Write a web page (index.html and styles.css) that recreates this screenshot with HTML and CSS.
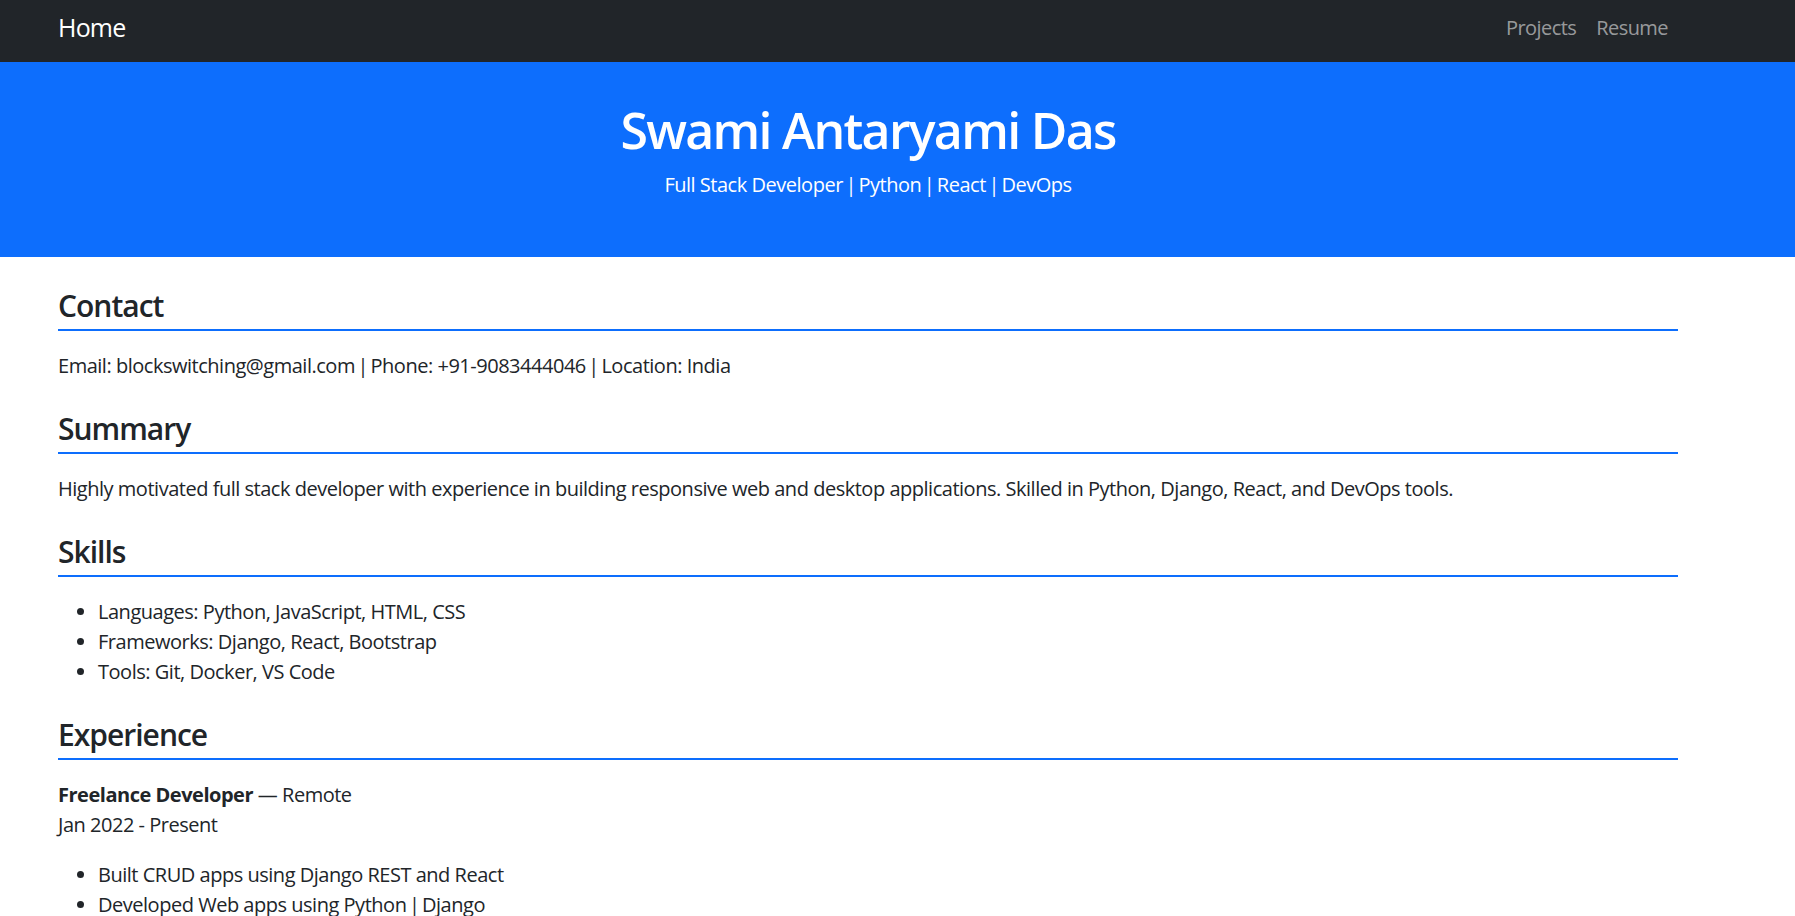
FILE: index.html
```html
<!DOCTYPE html>
<html lang="en">
<head>
<meta charset="utf-8">
<title>Swami Antaryami Das</title>
<link rel="stylesheet" href="styles.css">
</head>
<body>
<nav class="navbar">
  <div class="container nav-inner">
    <a class="brand" href="#">Home</a>
    <ul class="nav-links">
      <li><a class="nav-link" href="#">Projects</a></li>
      <li><a class="nav-link" href="#">Resume</a></li>
    </ul>
  </div>
</nav>
<header class="hero">
  <div class="container hero-inner">
    <h1 class="hero-title">Swami Antaryami Das</h1>
    <p class="hero-sub">Full Stack Developer <span class="sep">|</span> Python <span class="sep">|</span> React <span class="sep">|</span> DevOps</p>
  </div>
</header>
<main class="container content">
  <section class="section">
    <h2 class="section-title">Contact</h2>
    <p class="text">Email: blockswitching@gmail.com <span class="sep">|</span> Phone: +91-9083444046 <span class="sep">|</span> Location: India</p>
  </section>
  <section class="section">
    <h2 class="section-title">Summary</h2>
    <p class="text">Highly motivated full stack developer with experience in building responsive web and desktop applications. Skilled in Python, Django, React, and DevOps tools.</p>
  </section>
  <section class="section">
    <h2 class="section-title">Skills</h2>
    <ul class="list">
      <li>Languages: Python, JavaScript, HTML, CSS</li>
      <li>Frameworks: Django, React, Bootstrap</li>
      <li>Tools: Git, Docker, VS Code</li>
    </ul>
  </section>
  <section class="section">
    <h2 class="section-title">Experience</h2>
    <p class="text job-head"><strong class="job-role">Freelance Developer</strong> — Remote<br>Jan 2022 - Present</p>
    <ul class="list">
      <li>Built CRUD apps using Django REST and React</li>
      <li>Developed Web apps using Python <span class="sep">|</span> Django</li>
    </ul>
  </section>
</main>
</body>
</html>
```

FILE: styles.css
```css
html {
  scrollbar-width: none;
}

body {
  margin: 0;
  font-family: "Open Sans", "Noto Sans", "Liberation Sans", sans-serif;
  font-size: 20px;
  line-height: 30px;
  letter-spacing: -0.024em;
  color: #212529;
  background: #fff;
}

.container {
  box-sizing: border-box;
  width: 1650px;
  padding: 0 15px;
  margin-left: 43px;
}

.sep {
  margin: 0 -0.11em;
}

/* Navbar */
.navbar {
  background: #212529;
  height: 62px;
  padding-bottom: 6px;
  box-sizing: border-box;
}

.nav-inner {
  height: 56px;
  display: flex;
  align-items: center;
  justify-content: space-between;
}

.brand {
  font-size: 25px;
  line-height: 37.5px;
  letter-spacing: -0.032em;
  color: #fff;
  text-decoration: none;
}

.nav-links {
  list-style: none;
  margin: 0;
  padding: 0;
  display: flex;
}

.nav-link {
  display: block;
  padding: 0 10px;
  font-size: 20px;
  line-height: 30px;
  letter-spacing: -0.028em;
  color: rgba(255, 255, 255, 0.55);
  text-decoration: none;
}

/* Hero */
.hero {
  background: #0d6efd;
  color: #fff;
  padding: 38px 0 37px;
}

.hero-inner {
  text-align: center;
}

.hero-title {
  margin: 0 0 10px;
  font-size: 50px;
  line-height: 60px;
  font-weight: 600;
  letter-spacing: -0.034em;
}

.hero-sub {
  margin: 0 0 20px;
  font-size: 20px;
  line-height: 30px;
}

/* Content */
.content {
  padding-top: 30px;
  display: flex;
  flex-direction: column;
  gap: 29px;
}

.section-title {
  margin: 0 0 20px;
  padding: 1px 0 5px;
  border-bottom: 2px solid #0d6efd;
  font-size: 30px;
  line-height: 36px;
  font-weight: 600;
  letter-spacing: -0.033em;
}

.text {
  margin: 0 0 20px;
}

.list {
  margin: 0 0 20px;
  padding-left: 40px;
}

.section > :last-child {
  margin-bottom: 0;
}

.job-role {
  font-weight: 700;
}
```
